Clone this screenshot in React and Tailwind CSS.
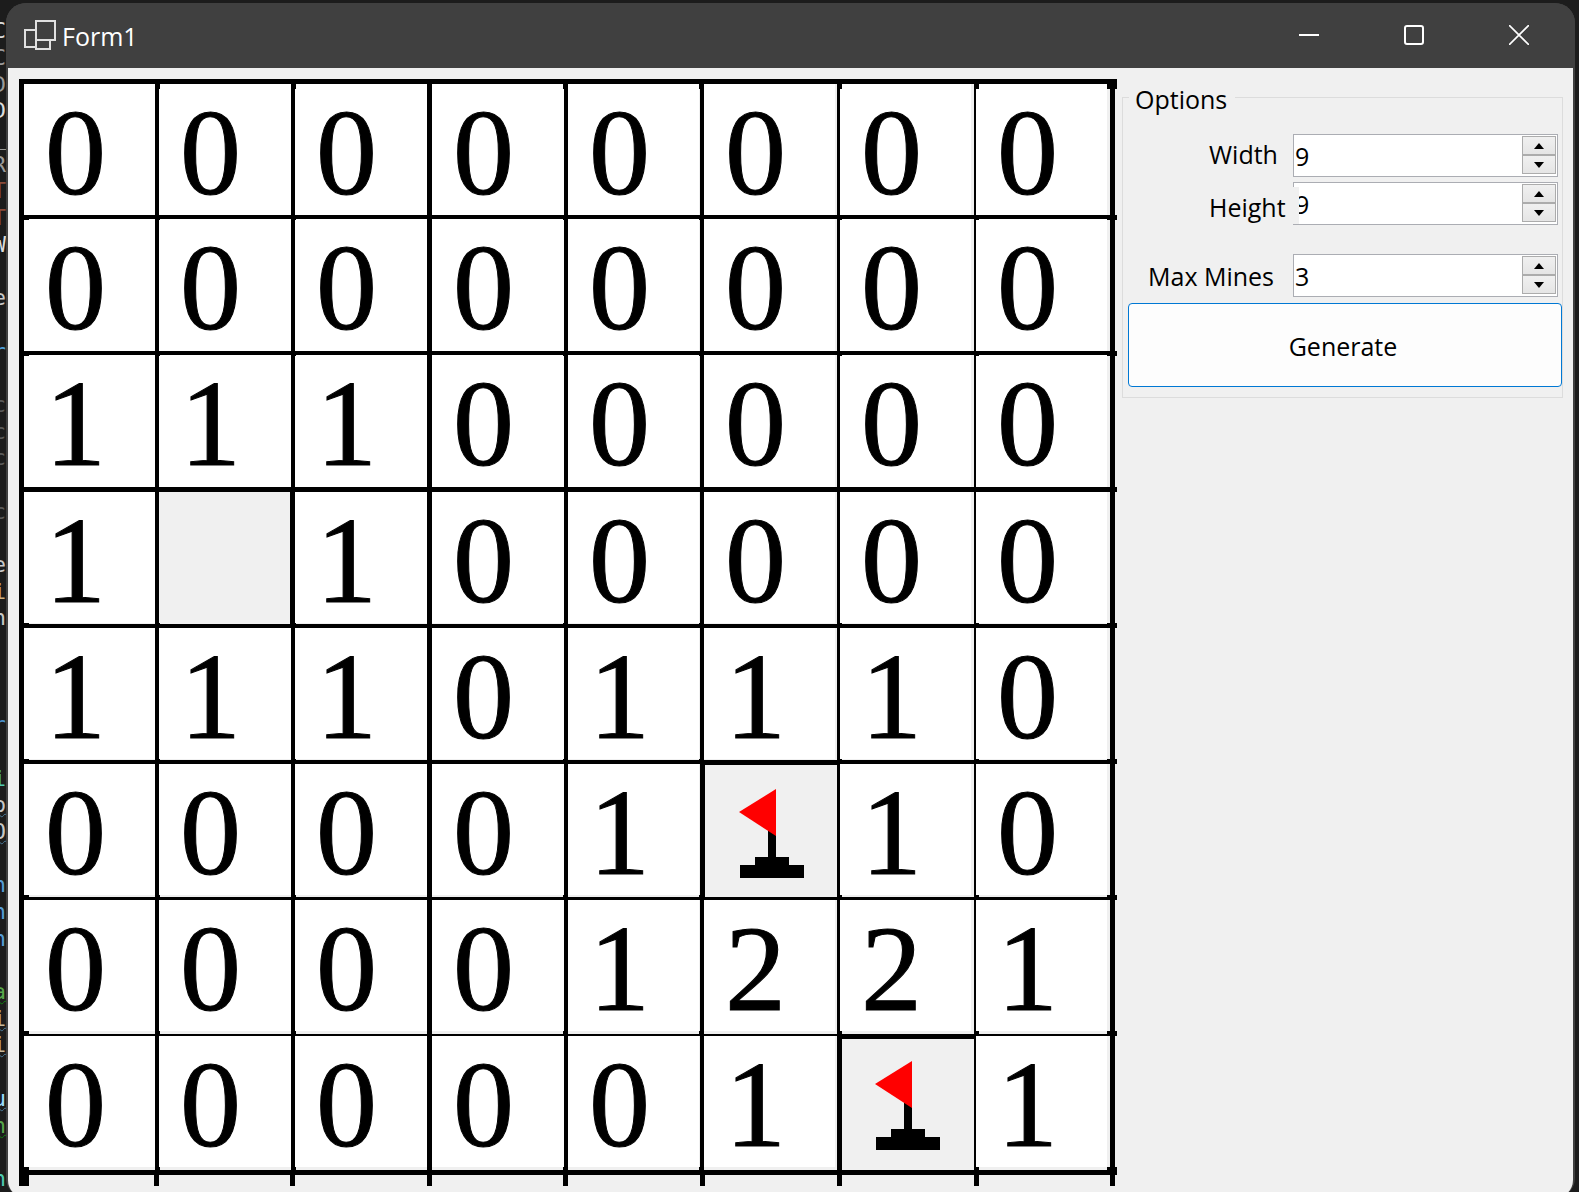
import { useState } from 'react';
import clsx from 'clsx';

// 'H' is a hidden cell, 'F' a flagged one
const BOARD = ['00000000', '00000000', '11100000', '1H100000', '11101110', '00001F10', '00001221', '000001F1'];

const COLS = [
  { cell: 'w-[135px] border-r-4', pane: 'w-full', mark: '-right-[5px] w-[5px]', stub: 'w-[130px]' },
  { cell: 'w-[136px] border-r-4', pane: 'w-full', mark: '-right-[5px] w-[5px]', stub: 'w-[136px]' },
  { cell: 'w-[137px] border-r-5', pane: 'w-full', mark: '-right-[5px] w-[5px]', stub: 'w-[137px]' },
  { cell: 'w-[136px] border-r-4', pane: 'w-full', mark: '-right-[4px] w-[5px]', stub: 'w-[136px]' },
  { cell: 'w-[136px] border-r-4', pane: 'w-[131px]', mark: '-right-[4px] w-[5px]', stub: 'w-[137px]' },
  { cell: 'w-[136px] border-r-3', pane: 'w-[131px]', mark: '-right-[5px] w-[5px]', stub: 'w-[137px]' },
  { cell: 'w-[136px] border-r-2', pane: 'w-[131px]', mark: '-right-[5px] w-[5px]', stub: 'w-[137px]' },
  { cell: 'w-[139px] border-r-5', pane: 'w-[131px]', mark: '-right-[7px] w-[10px]', stub: 'w-[136px]' },
];

const ROWS = [
  { cell: 'h-[135px] border-b-4', pane: 'h-full', mark: '-bottom-[5px] h-[5px]' },
  { cell: 'h-[136px] border-b-4', pane: 'h-full', mark: '-bottom-[5px] h-[5px]' },
  { cell: 'h-[137px] border-b-5', pane: 'h-full', mark: '-bottom-[5px] h-[5px]' },
  { cell: 'h-[136px] border-b-4', pane: 'h-[131px]', mark: '-bottom-[4px] h-[5px]' },
  { cell: 'h-[136px] border-b-4', pane: 'h-[131px]', mark: '-bottom-[4px] h-[5px]' },
  { cell: 'h-[136px] border-b-3', pane: 'h-[131px]', mark: '-bottom-[3px] h-[5px]' },
  { cell: 'h-[136px] border-b-2', pane: 'h-[131px]', mark: '-bottom-[2px] h-[5px]' },
  { cell: 'h-[139px] border-b-5', pane: 'h-[131px]', mark: '-bottom-[5px] h-[8px]' },
];

const CODE = [
  ['C', 'text-[#dcdcdc]'], ['C', 'text-[#9a9a9a]'], ['D', 'text-[#9a9a9a]'], ['D', 'text-[#dcdcdc]'],
  ['_', 'text-[#9a9a9a]'], ['R', 'text-[#9a9a9a]'], ['T', 'text-[#8a4a38]'], ['T', 'text-[#8a4a38]'],
  ['W', 'text-[#dcdcdc]'], null, ['e', 'text-[#c8c8c8]'], null, ['r', 'text-[#4f9fd8]'], null,
  ['c', 'text-[#5a5a5a]'], ['c', 'text-[#5a5a5a]'], ['c', 'text-[#5a5a5a]'], null, ['c', 'text-[#5a5a5a]'], null,
  ['e', 'text-[#c8c8c8]'], ['i', 'text-[#d0b080]'], ['n', 'text-[#c8c8c8]'], null, null, null,
  ['r', 'text-[#4a8fc8]'], null, ['i', 'text-[#4ec9b0]'],
  ['p', 'text-[#c8c8c8] underline decoration-wavy decoration-1 decoration-[#4a7a9a]'],
  ['O', 'text-[#c8c8c8] underline decoration-wavy decoration-1 decoration-[#4a7a9a]'], null,
  ['n', 'text-[#569cd6]'], ['n', 'text-[#569cd6]'], ['n', 'text-[#569cd6]'], null,
  ['a', 'text-[#57a64a] underline decoration-wavy decoration-1 decoration-[#108010]'],
  ['i', 'text-[#c8b89a] underline decoration-wavy decoration-1 decoration-[#4a7a9a]'],
  ['i', 'text-[#c8b89a] underline decoration-wavy decoration-1 decoration-[#4a7a9a]'], null,
  ['u', 'text-[#9cdcfe] underline decoration-wavy decoration-1 decoration-[#4a7a9a]'],
  ['n', 'text-[#57a64a] underline decoration-wavy decoration-1 decoration-[#108010]'], null,
  ['n', 'text-[#4ec9b0]'],
];

function CodeStrip() {
  return (
    <div className="flex w-[6px] flex-none flex-col overflow-hidden pt-[18px] font-['DejaVu_Sans_Mono',monospace] text-[22px]">
      {CODE.map((line, i) => (
        <div key={i} className="flex min-h-0 flex-1 items-center justify-end leading-none">
          {line && <span className={line[1]}>{line[0]}</span>}
        </div>
      ))}
    </div>
  );
}

function TitleBar() {
  const button = 'flex h-full w-[105px] items-center justify-center hover:bg-white/10';
  return (
    <header className="flex h-[65px] flex-none items-center bg-[#404040] pr-1 pb-px pl-[18px] text-white">
      <svg className="h-8 w-8 flex-none" viewBox="0 0 32 32" fill="none" stroke="#e0e0e0" strokeWidth="2">
        <path d="M12 11H1v17h11" />
        <rect x="12" y="2" width="19" height="19" />
        <path d="M12 21v9h14v-9" />
      </svg>
      <h1 className="flex-1 pt-[3px] pl-[6px] text-[25px]">Form1</h1>
      <button type="button" aria-label="Minimize" className={button}>
        <svg className="h-5 w-5" viewBox="0 0 20 20">
          <path d="M0 10h20" stroke="#fff" strokeWidth="2" />
        </svg>
      </button>
      <button type="button" aria-label="Maximize" className={button}>
        <svg className="h-5 w-5" viewBox="0 0 20 20">
          <rect x="1" y="1" width="18" height="18" rx="2" fill="none" stroke="#fff" strokeWidth="2" />
        </svg>
      </button>
      <button type="button" aria-label="Close" className={button}>
        <svg className="h-5 w-5" viewBox="0 0 20 20">
          <path d="M0 0l20 20M20 0L0 20" stroke="#fff" strokeWidth="1.6" />
        </svg>
      </button>
    </header>
  );
}

function Flag() {
  return (
    <svg className="h-[131px] w-[131px] flex-none" viewBox="0 0 131 131">
      <path d="M64 65h8v28h13v8h15v13H36v-13h15v-8h13z" fill="#000" />
      <path d="M72 25v47L35 48z" fill="#f00" />
    </svg>
  );
}

function Cell({ value, row, col }) {
  const hidden = value === 'H' || value === 'F';
  return (
    <div className={clsx('relative flex-none border-black', COLS[col].cell, ROWS[row].cell)}>
      {hidden ? (
        <button
          type="button"
          aria-label={value === 'F' ? 'Flagged cell' : 'Hidden cell'}
          className={clsx(
            'flex h-full w-full items-start overflow-hidden',
            value === 'H' && 'border-r border-black',
            value === 'F' && (row === 7 ? 'shadow-[inset_2px_3px_0_#000]' : 'shadow-[inset_1px_1px_0_#000]'),
          )}
        >
          {value === 'F' && <Flag />}
        </button>
      ) : (
        <div
          className={clsx(
            "bg-white pl-[21px] font-['Liberation_Serif',serif] text-[122px] leading-[137px] text-black [-webkit-text-stroke:1px_#000]",
            COLS[col].pane,
            ROWS[row].pane,
          )}
        >
          {value}
        </div>
      )}
      {/* the ruled lines overshoot a little at every crossing */}
      <span className={clsx('absolute z-10 bg-black', COLS[col].mark, ROWS[row].mark)} />
      {col === 0 && <span className={clsx('absolute left-0 z-10 w-[5px] bg-black', ROWS[row].mark)} />}
      {row === 0 && <span className={clsx('absolute -top-[5px] z-10 h-[10px] bg-black', COLS[col].mark)} />}
    </div>
  );
}

function Board() {
  return (
    <div className="flex-none">
      <div className="border-t-5 border-l-5 border-black">
        {BOARD.map((line, row) => (
          <div key={row} className="flex">
            {line.split('').map((value, col) => (
              <Cell key={col} value={value} row={row} col={col} />
            ))}
          </div>
        ))}
      </div>
      <div className="flex h-[11px] border-l-10 border-black">
        {COLS.map((col, i) => (
          <div key={i} className={clsx('flex-none border-r-5 border-black', col.stub)} />
        ))}
      </div>
    </div>
  );
}

function NumberField({ id, value, onChange }) {
  const spin =
    'flex h-[19px] w-full items-center justify-center border border-[#acacac] bg-linear-to-b from-[#f0f0f0] to-[#e5e5e5]';
  return (
    <div className="flex h-[43px] w-[265px] flex-none border border-[#abadb3] bg-white p-px">
      <input
        id={id}
        type="text"
        inputMode="numeric"
        value={value}
        onChange={(event) => onChange(Number(event.target.value) || 0)}
        className="min-w-0 flex-1 pt-[2px] text-[25px] outline-none"
      />
      <div className="w-[34px] flex-none">
        <button type="button" aria-label="Increase" className={spin} onClick={() => onChange(value + 1)}>
          <svg className="h-[6px] w-[10px]" viewBox="0 0 10 6">
            <path d="M5 0l5 6H0z" />
          </svg>
        </button>
        <button type="button" aria-label="Decrease" className={spin} onClick={() => onChange(value - 1)}>
          <svg className="h-[6px] w-[10px]" viewBox="0 0 10 6">
            <path d="M0 0h10L5 6z" />
          </svg>
        </button>
      </div>
    </div>
  );
}

function Options() {
  const [width, setWidth] = useState(9);
  const [height, setHeight] = useState(9);
  const [mines, setMines] = useState(3);

  return (
    <fieldset className="min-w-0 flex-1 border border-[#dcdcdc] pb-[10px] text-[25px] text-black">
      <legend className="ml-[6px] h-[36px] pr-2 pl-[6px] leading-[40px]">Options</legend>
      <div className="mt-[19px] flex pr-1">
        <label htmlFor="width" className="flex-1 pl-[86px] leading-[40px]">
          Width
        </label>
        <NumberField id="width" value={width} onChange={setWidth} />
      </div>
      <div className="mt-[5px] flex items-end pr-1">
        <label
          htmlFor="height"
          className="relative z-10 mb-px -mr-[6px] ml-[86px] h-[37px] flex-1 bg-[#f0f0f0] leading-[40px]"
        >
          Height
        </label>
        <NumberField id="height" value={height} onChange={setHeight} />
      </div>
      <div className="mt-[29px] flex h-[43px] pr-1">
        <label htmlFor="mines" className="flex-1 pl-[25px] leading-[45px]">
          Max Mines
        </label>
        <NumberField id="mines" value={mines} onChange={setMines} />
      </div>
      <div className="mt-[6px] pl-[5px]">
        <button
          type="button"
          className="block h-[84px] w-full rounded-[4px] border border-[#0078d4] bg-[#fdfdfd] pt-[3px] pr-1"
        >
          Generate
        </button>
      </div>
    </fieldset>
  );
}

export default function App() {
  return (
    <div className="flex h-screen overflow-hidden bg-[#1c1c1c] font-['Open_Sans','Noto_Sans',sans-serif]">
      <CodeStrip />
      <div className="mt-[3px] mr-1 -mb-[6px] flex min-w-0 flex-1 flex-col overflow-hidden rounded-[20px] bg-[#404040]">
        <TitleBar />
        <main className="mx-[2px] flex min-h-0 flex-1 items-start gap-[7px] rounded-b-[18px] bg-[#f0f0f0] pt-[11px] pr-[10px] pl-[11px]">
          <Board />
          <Options />
        </main>
      </div>
    </div>
  );
}
